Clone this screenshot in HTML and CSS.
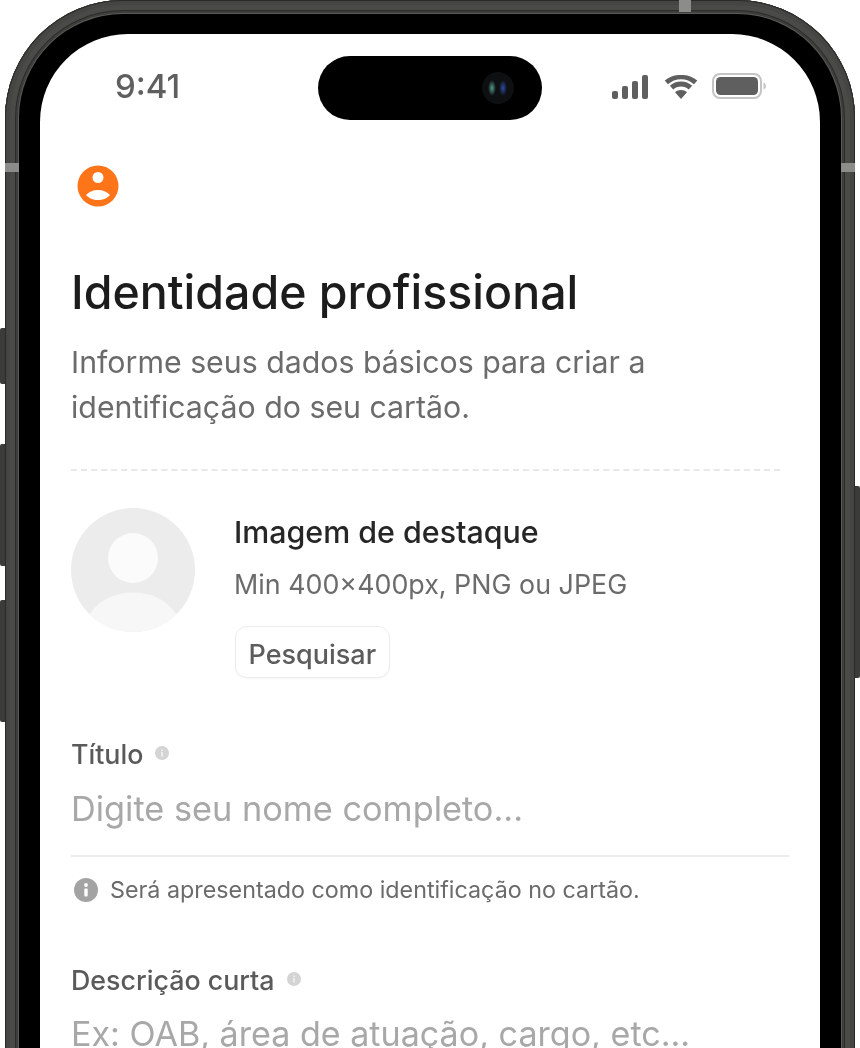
FILE: index.html
```html
<!DOCTYPE html>
<html lang="pt-BR">
<head>
<meta charset="utf-8">
<title>Identidade profissional</title>
<link rel="stylesheet" href="styles.css">
</head>
<body>
<div class="device">
  <span class="btn btn-l b1"></span><span class="btn btn-l b2"></span><span class="btn btn-l b3"></span><span class="btn btn-r"></span>
  <div class="frame">
    <span class="band band-top"></span><span class="band band-left"></span><span class="band band-right"></span>
    <div class="bezel">
      <main class="screen">
        <header class="status">
          <span class="time">9:41</span>
          <div class="island"><span class="camera"></span></div>
          <div class="status-icons">
            <svg class="signal" viewBox="0 0 36 24" width="36" height="24"><rect x="0" y="16" width="6" height="8" rx="2"/><rect x="10" y="11" width="6" height="13" rx="2"/><rect x="20" y="6" width="6" height="18" rx="2"/><rect x="30" y="0" width="6" height="24" rx="2"/></svg>
            <svg class="wifi" viewBox="0 0 34 24" width="34" height="24"><path d="M17 4.2c5 0 9.600 1.900 13 5.100l3.300-3.700C29 1.800 23.300-.1 17-.1S5 1.800.7 5.600L4 9.300c3.400-3.200 8-5.100 13-5.100z"/><path d="M17 11.500c3 0 5.700 1.100 7.800 3l3.300-3.700C25.200 8.100 21.300 6.600 17 6.600S8.800 8.100 5.900 10.800l3.300 3.700c2.100-1.900 4.800-3 7.800-3z"/><path d="M17 24l6-6.800c-1.600-1.300-3.700-2.200-6-2.200s-4.400.9-6 2.200z"/></svg>
            <svg class="battery" viewBox="0 0 54 26" width="54" height="26"><rect x="1" y="1" width="48" height="24" rx="7" fill="none" stroke="#c4c4c4" stroke-width="2"/><rect x="4" y="4" width="42" height="18" rx="4.500"/><path d="M51.500 9.500c1.500.5 2.500 2 2.500 3.500s-1 3-2.500 3.500z" fill="#c4c4c4"/></svg>
          </div>
        </header>
        <div class="content">
          <svg class="user-badge" viewBox="0 0 42 42" width="42" height="42"><circle cx="21" cy="21" r="20.500" fill="#fd7419"/><circle cx="21" cy="12.500" r="5.500" fill="#fff"/><path d="M9 30c2.500-3 7-5 12-5s9.500 2 12 5c-2.500 3-7 5-12 5s-9.500-2-12-5z" fill="#fff"/></svg>
          <h1>Identidade profissional</h1>
          <p class="lead">Informe seus dados básicos para criar a identificação do seu cartão.</p>
          <hr class="dashed">
          <section class="upload">
            <svg class="avatar" viewBox="0 0 124 124" width="124" height="124"><circle cx="62" cy="62" r="62" fill="#ececec"/><circle cx="62" cy="50" r="25" fill="#fbfbfb"/><path d="M18.500 106.200C28 92 44 84.500 62 84.500s34 7.500 43.500 21.700A62 62 0 0 1 62 124a62 62 0 0 1-43.500-17.800z" fill="#f7f7f7"/></svg>
            <div class="upload-info">
              <h2>Imagem de destaque</h2>
              <p class="hint">Min 400×400px, PNG ou JPEG</p>
              <button class="search" type="button">Pesquisar</button>
            </div>
          </section>
          <section class="field">
            <div class="label">Título <svg class="mini-info" viewBox="0 0 14 14" width="14" height="14"><circle cx="7" cy="7" r="7" fill="#d4d4d4"/><rect x="6.200" y="6" width="1.600" height="4.500" fill="#f2f2f2"/><rect x="6.200" y="3.500" width="1.600" height="1.600" fill="#f2f2f2"/></svg></div>
            <div class="placeholder underlined">Digite seu nome completo...</div>
            <div class="help"><svg class="help-icon" viewBox="0 0 24 24" width="24" height="24"><circle cx="12" cy="12" r="12" fill="#a3a3a3"/><rect x="10.300" y="10.500" width="3.400" height="8" rx="1" fill="#fff"/><circle cx="12" cy="7" r="1.900" fill="#fff"/></svg><span>Será apresentado como identificação no cartão.</span></div>
          </section>
          <section class="field field-second">
            <div class="label">Descrição curta <svg class="mini-info" viewBox="0 0 14 14" width="14" height="14"><circle cx="7" cy="7" r="7" fill="#d4d4d4"/><rect x="6.200" y="6" width="1.600" height="4.500" fill="#f2f2f2"/><rect x="6.200" y="3.500" width="1.600" height="1.600" fill="#f2f2f2"/></svg></div>
            <div class="placeholder">Ex: OAB, área de atuação, cargo, etc...</div>
          </section>
        </div>
      </main>
    </div>
  </div>
</div>
</body>
</html>
```
FILE: styles.css
```css
* { box-sizing: border-box; }
html, body { margin: 0; height: 100%; background: #fff; overflow: hidden; }
body { font-family: Inter, "Liberation Sans", sans-serif; }

.device { position: relative; width: 860px; height: 1048px; overflow: hidden; }

.frame {
  position: relative;
  height: 1200px;
  margin: 0 5px;
  padding: 14px;
  border-radius: 118px;
  background: #3e3e3c;
  box-shadow: inset 0 0 0 1px #2a2a28, inset 0 0 0 5px #454543, inset 0 0 0 10px #4a4a48, inset 0 0 0 11px #2c2c2a;
}
.bezel {
  height: 100%;
  padding: 20px 21px;
  border-radius: 104px;
  background: #000;
  box-shadow: 0 0 0 1px #5a5a58;
}
.screen {
  position: relative;
  height: 100%;
  border-radius: 88px;
  background: #fff;
  overflow: hidden;
}

.btn { position: absolute; background: #3b3b39; width: 6px; }
.btn-l { left: 0; border-radius: 2px 0 0 2px; }
.btn-r { right: 0; top: 486px; height: 192px; border-radius: 0 2px 2px 0; }
.b1 { top: 328px; height: 56px; }
.b2 { top: 444px; height: 122px; }
.b3 { top: 600px; height: 122px; }

.band { position: absolute; background: #8c8c8a; }
.band-top { top: 0; right: 164px; width: 12px; height: 12px; }
.band-left { top: 163px; left: 0; width: 14px; height: 9px; }
.band-right { top: 163px; right: 0; width: 14px; height: 9px; }

.status {
  position: relative;
  height: 96px;
  color: #5f5f5f;
}
.time {
  position: absolute;
  left: 75px;
  top: 34px;
  font-size: 33px;
  line-height: 36px;
  font-weight: 500;
  filter: blur(.5px);
}
.island {
  position: absolute;
  left: 278px;
  top: 22px;
  width: 224px;
  height: 64px;
  border-radius: 32px;
  background: #000;
}
.camera {
  position: absolute;
  right: 28px;
  top: 16px;
  width: 32px;
  height: 32px;
  border-radius: 50%;
  background:
    radial-gradient(ellipse 4px 8px at 10px 16px, #4f9c8c, transparent),
    radial-gradient(ellipse 4px 8px at 21px 16px, #2a4da0, transparent),
    #0d0f11;
}
.status-icons {
  position: absolute;
  left: 572px;
  top: 39px;
  display: flex;
  align-items: center;
  gap: 15px;
  fill: #5f5f5f;
}
.status-icons .wifi { margin: 0 -1px 0 1px; }
.status-icons .battery { margin-bottom: 2px; }

.content { padding: 35px 31px 0; filter: blur(.55px); }
.user-badge { display: block; margin-left: 6px; }
h1 {
  margin: 57px 0 0;
  font-size: 46.5px;
  line-height: 56px;
  font-weight: 500;
  color: #1c1c1c;
}
.lead {
  margin: 20px 0 0;
  width: 640px;
  font-size: 30.3px;
  line-height: 45px;
  color: #6b6b6b;
}
.dashed {
  margin: 39px 9px 0 0;
  height: 0;
  border: 0;
  border-top: 2px dashed #e8e8e8;
}
.upload { display: flex; gap: 39px; margin-top: 37px; }
.avatar { flex: none; }
.upload-info { padding-top: 4px; }
h2 {
  margin: 0;
  font-size: 30.400px;
  line-height: 40px;
  font-weight: 500;
  color: #262626;
}
.hint {
  margin: 16px 0 0;
  font-size: 26.850px;
  line-height: 32px;
  color: #6b6b6b;
}
.search {
  display: block;
  margin: 26px 0 0 1px;
  height: 52px;
  padding: 4px 12.5px 0;
  border: 1px solid #ececec;
  border-radius: 12px;
  background: #fff;
  font: 500 27px/1 Inter, "Liberation Sans", sans-serif;
  color: #5c5c5c;
  box-shadow: 0 1px 2px rgba(0,0,0,.04);
}
.field { margin-top: 59px; }
.label {
  display: flex;
  align-items: flex-start;
  gap: 12px;
  font-size: 26.800px;
  line-height: 34px;
  font-weight: 500;
  color: #5a5a5a;
}
.mini-info { margin-top: 9px; }
.placeholder {
  margin-top: 18px;
  font-size: 34.300px;
  line-height: 40px;
  color: #a8a8a8;
}
.underlined { padding-bottom: 26px; border-bottom: 2px solid #ececec; }
.help {
  display: flex;
  align-items: center;
  gap: 12px;
  margin: 10px 0 0 3px;
  font-size: 23.300px;
  line-height: 46px;
  color: #6b6b6b;
}
.help-icon { flex: none; }
.field-second { margin-top: 50px; }
.field-second .placeholder { margin-top: 17px; font-size: 34.100px; }
```
